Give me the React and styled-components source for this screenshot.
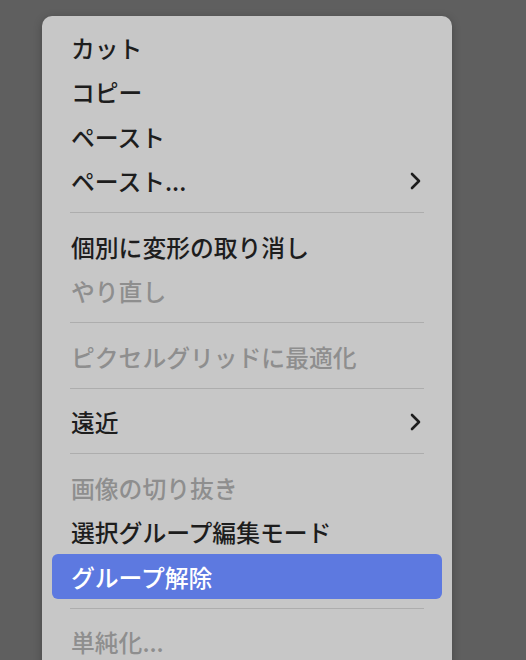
import React from "react";
import styled, { createGlobalStyle } from "styled-components";

const GlobalStyle = createGlobalStyle`
  html, body {
    margin: 0;
    padding: 0;
    height: 660px;
    overflow: hidden;
    background: #5f5f5f;
  }
`;

const Page = styled.div`
  height: 660px;
  padding: 16px 0 0 42px;
  box-sizing: border-box;
  overflow: hidden;
`;

const Menu = styled.div`
  width: 410px;
  box-sizing: border-box;
  padding: 9px 10px 30px;
  background: #c7c7c7;
  border-radius: 10px;
  box-shadow: 0 2px 8px rgba(0, 0, 0, 0.25);
  font-family: "Noto Sans CJK JP", "Noto Sans", sans-serif;
`;

const Item = styled.div`
  height: 44.5px;
  display: flex;
  align-items: center;
  justify-content: space-between;
  padding: 0 21px 0 19px;
  border-radius: 6px;
  font-size: 23.8px;
  font-weight: 500;
  color: ${({ disabled, active }) =>
    active ? "#ffffff" : disabled ? "#8e8e8e" : "#1d1d1d"};
  background: ${({ active }) => (active ? "#5d79e0" : "transparent")};
`;

const Separator = styled.div`
  height: 1px;
  margin: 9px 18px 11px;
  background: #adadad;
`;

const Chevron = () => (
  <svg width="11" height="18" viewBox="0 0 11 18">
    <polyline
      points="2,2 9,9 2,16"
      fill="none"
      stroke="#1d1d1d"
      strokeWidth="2.6"
      strokeLinecap="round"
      strokeLinejoin="round"
    />
  </svg>
);

const menu = [
  { label: "カット" },
  { label: "コピー" },
  { label: "ペースト" },
  { label: "ペースト...", sub: true },
  "sep",
  { label: "個別に変形の取り消し" },
  { label: "やり直し", disabled: true },
  "sep",
  { label: "ピクセルグリッドに最適化", disabled: true },
  "sep",
  { label: "遠近", sub: true },
  "sep",
  { label: "画像の切り抜き", disabled: true },
  { label: "選択グループ編集モード" },
  { label: "グループ解除", active: true },
  "sep",
  { label: "単純化...", disabled: true },
];

export default function App() {
  return (
    <>
      <GlobalStyle />
      <Page>
        <Menu>
          {menu.map((entry, i) =>
            entry === "sep" ? (
              <Separator key={i} />
            ) : (
              <Item key={i} disabled={entry.disabled} active={entry.active}>
                <span>{entry.label}</span>
                {entry.sub && <Chevron />}
              </Item>
            )
          )}
        </Menu>
      </Page>
    </>
  );
}
